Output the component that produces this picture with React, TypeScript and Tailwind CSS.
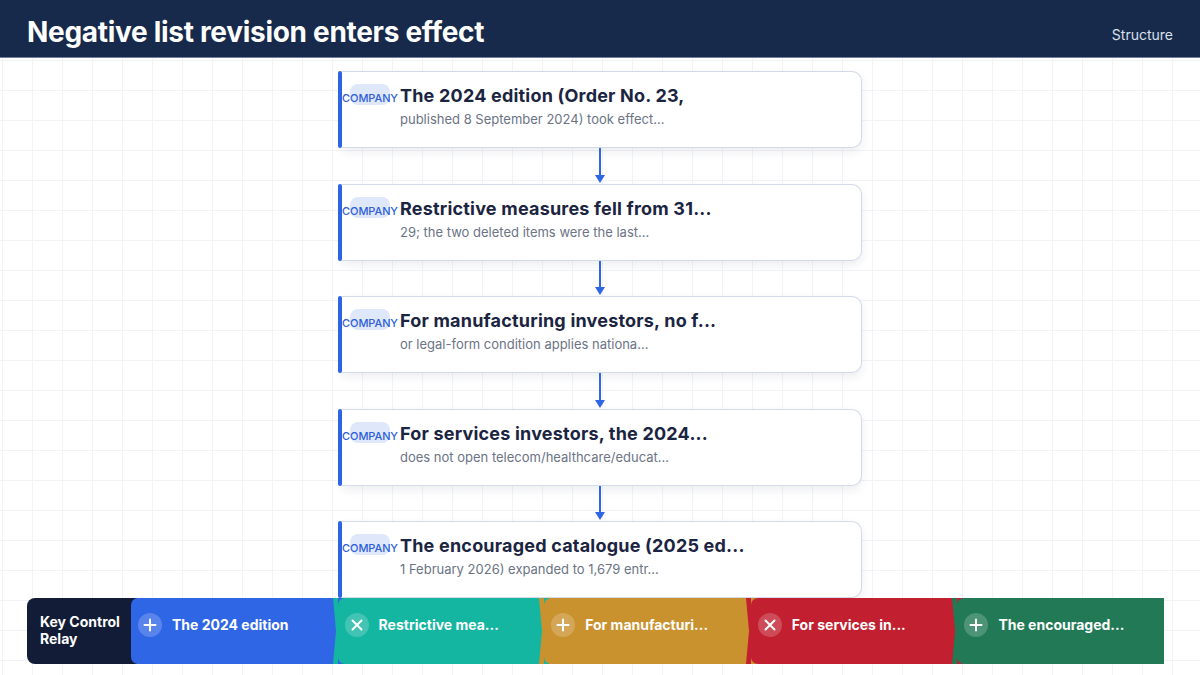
import React from "react";

const cards = [
  ["The 2024 edition (Order No. 23,", "published 8 September 2024) took effect..."],
  ["Restrictive measures fell from 31...", "29; the two deleted items were the last..."],
  ["For manufacturing investors, no f...", "or legal-form condition applies nationa..."],
  ["For services investors, the 2024...", "does not open telecom/healthcare/educat..."],
  ["The encouraged catalogue (2025 ed...", "1 February 2026) expanded to 1,679 entr..."],
];

const segs = [
  { color: "#2f66e6", icon: "plus", label: "The 2024 edition" },
  { color: "#14b5a1", icon: "x", label: "Restrictive mea..." },
  { color: "#c9922e", icon: "plus", label: "For manufacturi..." },
  { color: "#c21f30", icon: "x", label: "For services in..." },
  { color: "#217a55", icon: "plus", label: "The encouraged..." },
];

function Icon({ kind }: { kind: string }) {
  return (
    <div className="flex h-[24px] w-[24px] shrink-0 items-center justify-center rounded-full bg-white/20">
      <svg width="14" height="14" viewBox="0 0 14 14" fill="none" stroke="white" strokeWidth="2" strokeLinecap="round">
        {kind === "plus" ? (
          <>
            <line x1="7" y1="1.5" x2="7" y2="12.5" />
            <line x1="1.5" y1="7" x2="12.5" y2="7" />
          </>
        ) : (
          <>
            <line x1="2.5" y1="2.5" x2="11.5" y2="11.5" />
            <line x1="11.5" y1="2.5" x2="2.5" y2="11.5" />
          </>
        )}
      </svg>
    </div>
  );
}

function Card({ title, sub }: { title: string; sub: string }) {
  return (
    <div className="flex h-[77px] w-[524px] shrink-0">
      <div className="w-[4px] shrink-0 rounded-full bg-[#2f66e6]" />
      <div className="flex-1 rounded-r-[10px] border border-l-0 border-[#d3dae8] bg-white pl-[8px] pt-[12px] shadow-[0_4px_10px_rgba(30,41,80,0.08)]">
        <div className="flex items-baseline gap-[10px]">
          <div className="flex h-[21px] w-[40px] shrink-0 items-end justify-center rounded-[8px] bg-[#dfe7fb]">
            <span className="whitespace-nowrap text-[11px] font-medium leading-[13px] tracking-[-0.1px] text-[#2f5fd6]">COMPANY</span>
          </div>
          <div className="whitespace-nowrap text-[18px] font-bold leading-[24px] tracking-[0.2px] text-[#1b2440]">{title}</div>
        </div>
        <div className="mt-[2px] pl-[50px] whitespace-nowrap text-[13px] leading-[18px] text-[#6b7385]">{sub}</div>
      </div>
    </div>
  );
}

function Arrow() {
  return (
    <div className="flex h-[35.5px] flex-col items-center">
      <div className="w-[2px] flex-1 bg-[#2f66e6]" />
      <svg width="10" height="8" viewBox="0 0 10 8" className="mb-[1px]">
        <polygon points="0,0 10,0 5,8" fill="#2f66e6" />
      </svg>
    </div>
  );
}

export default function App() {
  return (
    <div className="flex h-[675px] w-[1200px] flex-col overflow-hidden bg-white" style={{ fontFamily: "Inter, 'Noto Sans', sans-serif" }}>
      <header className="flex h-[58px] shrink-0 items-center justify-between border-b border-[#6f82a2] bg-[#172a4b] pl-[27px] pr-[27px]">
        <h1 className="pt-[6px] text-[28px] font-bold tracking-[-0.3px] text-white">Negative list revision enters effect</h1>
        <span className="pt-[12px] text-[14px] text-[#d8e0ec]">Structure</span>
      </header>
      <main className="flex flex-1 flex-col bg-[linear-gradient(to_right,#f1f3f7_1px,transparent_1px),linear-gradient(to_bottom,#f1f3f7_1px,transparent_1px)] bg-[size:30px_30px] bg-[position:2px_2px]">
        <div className="flex flex-col items-center pt-[13px]">
          {cards.map(([t, s], i) => (
            <React.Fragment key={i}>
              <Card title={t} sub={s} />
              {i < cards.length - 1 && <Arrow />}
            </React.Fragment>
          ))}
        </div>
        <div className="flex h-[66px] shrink-0 pl-[27px]">
          <div className="h-full w-[110px] shrink-0 rounded-l-[8px] bg-[#121c36] pl-[13px] pt-[15px] text-[14px] font-bold leading-[17px] text-white">
            Key Control<br />Relay
          </div>
          {segs.map((s, i) => {
            const next = segs[i + 1];
            const last = i === segs.length - 1;
            return (
              <div
                key={i}
                className={`relative -ml-[6px] flex h-full shrink-0 items-start rounded-l-[7px] pl-[7px] pt-[15px] ${last ? "w-[206.6px]" : "w-[212.6px]"}`}
                style={{ backgroundColor: s.color }}
              >
                <Icon kind={s.icon} />
                <span className="ml-[10px] whitespace-nowrap text-[14px] font-bold leading-[24px] text-white">{s.label}</span>
                {next && (
                  <svg className="absolute right-[6px] top-0 h-full" width="5" viewBox="0 0 5 66" preserveAspectRatio="none">
                    <polygon points="0,0 5,0 5,66 0,66 3,33" fill={next.color} />
                  </svg>
                )}
              </div>
            );
          })}
        </div>
        <div className="h-[10px]" />
      </main>
    </div>
  );
}
